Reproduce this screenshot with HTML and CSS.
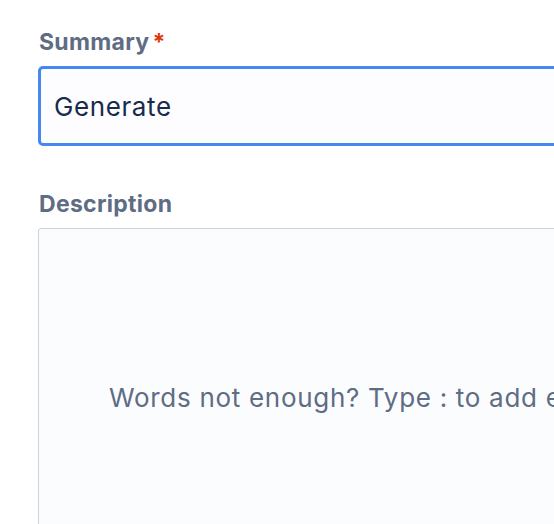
FILE: index.html
```html
<!DOCTYPE html>
<html lang="en">
<head>
<meta charset="utf-8">
<title>Create issue</title>
<link rel="stylesheet" href="styles.css">
</head>
<body>
<form class="form">
  <div class="field">
    <label class="label" for="summary">Summary<span class="req">*</span></label>
    <div class="input-wrap">
      <input id="summary" class="input" type="text" value="Generate">
    </div>
  </div>
  <div class="field field-desc">
    <div class="label">Description</div>
    <div class="editor">
      <div class="placeholder">Words not enough? Type : to add emoji, or @ to mention someone.</div>
    </div>
  </div>
</form>
</body>
</html>
```
FILE: styles.css
```css
html, body {
  margin: 0;
  padding: 0;
  background: #ffffff;
  overflow: hidden;
  height: 100%;
}
body {
  font-family: "Inter", "Liberation Sans", sans-serif;
}
.form {
  padding: 28px 0 0 38px;
  display: flex;
  flex-direction: column;
  gap: 44px;
  width: 700px;
}
.field {
  display: flex;
  flex-direction: column;
  gap: 10px;
}
.label {
  font-size: 23px;
  font-weight: 700;
  letter-spacing: 0.3px;
  color: #5e6c84;
  line-height: 28px;
  padding-left: 1px;
}
.req {
  color: #de350b;
  margin-left: 3px;
}
.input-wrap {
  border: 3px solid #4688f2;
  border-radius: 5px;
  background: #fdfdff;
  height: 74px;
  display: flex;
  align-items: center;
}
.input {
  border: 0;
  outline: 0;
  background: transparent;
  font-family: "Inter", "Liberation Sans", sans-serif;
  font-size: 26px;
  letter-spacing: 0.6px;
  color: #172b4d;
  padding: 0 0 0 13px;
  width: 100%;
}
.editor {
  border: 1px solid #cfd2d8;
  border-radius: 3px;
  background: #fbfcfe;
  height: 400px;
  padding: 154px 0 0 70px;
  white-space: nowrap;
}
.placeholder {
  font-size: 26px;
  letter-spacing: 0.7px;
  color: #5e6c84;
  line-height: 30px;
}
```
